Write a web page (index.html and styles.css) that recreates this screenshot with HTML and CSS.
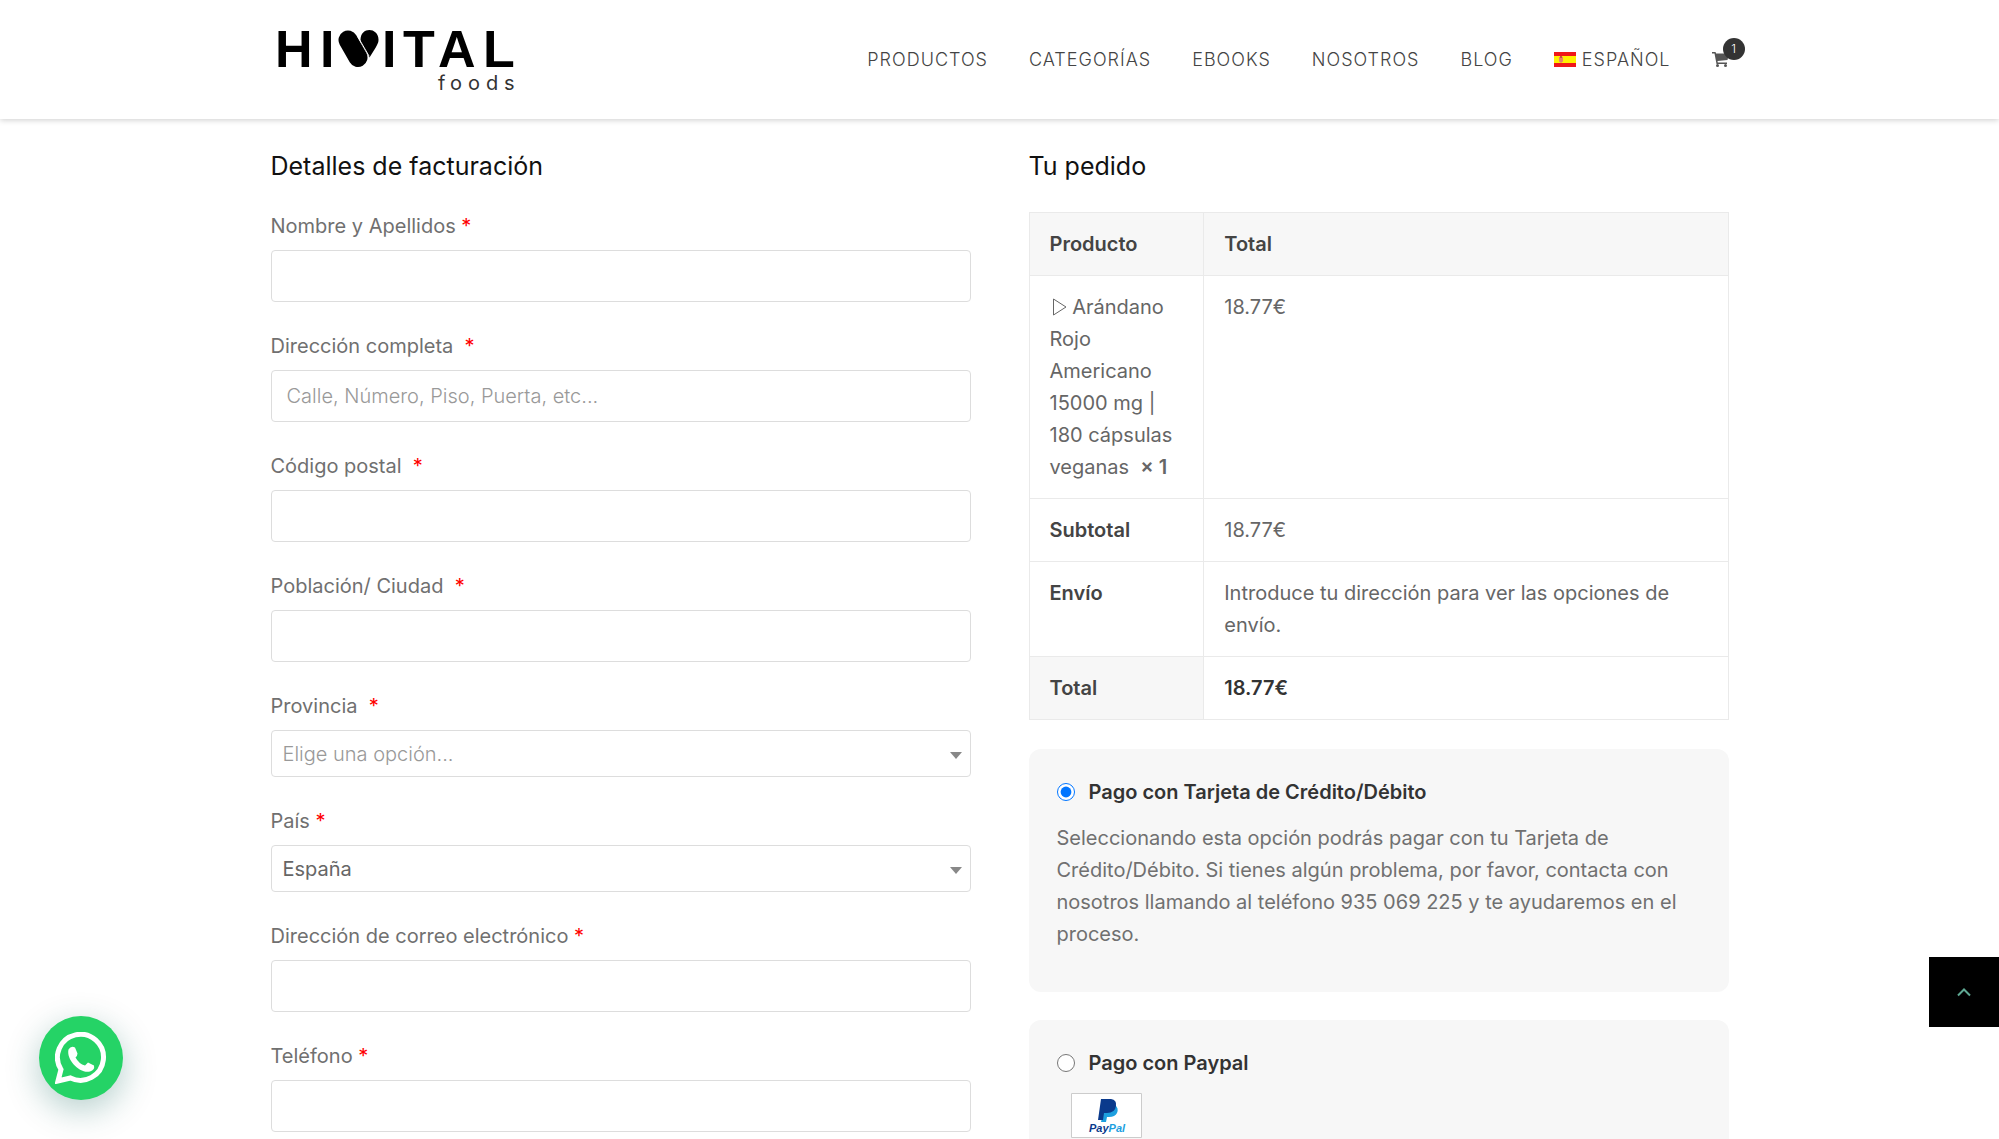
FILE: index.html
```html
<!DOCTYPE html>
<html lang="es">
<head>
<meta charset="utf-8">
<meta name="viewport" content="width=device-width, initial-scale=1">
<title>Finalizar compra – Hivital Foods</title>
<link rel="stylesheet" href="styles.css">
</head>
<body>
<header class="site-header">
  <div class="container header-inner">
    <a class="logo" href="#" aria-label="Hivital foods">
      <svg width="240" height="64" viewBox="275 28 240 64">
        <text class="logo-name" x="275 320 382 403 438 483" y="67">HIITAL</text>
        <g stroke-linecap="round" fill="none">
          <path d="M348 40 358 57.500" stroke="#000" stroke-width="19"/>
          <path d="M360.500 40.500C360 26 379 27 378.500 40C378.500 43 377 46 369.500 57.500L361.500 44Z" fill="#000"/>
          <path d="M358 37 369 56" stroke="#fff" stroke-width="1"/>
        </g>
        <text class="logo-sub" x="438 450 468 486 504" y="90">foods</text>
      </svg>
    </a>
    <nav class="nav">
      <a href="#">PRODUCTOS</a>
      <a href="#">CATEGORÍAS</a>
      <a href="#">EBOOKS</a>
      <a href="#">NOSOTROS</a>
      <a href="#">BLOG</a>
      <a class="lang" href="#">
        <svg width="22" height="15" viewBox="0 0 22 15"><path fill="#f01818" d="M0 0h22v15H0z"/><path fill="#fff000" d="M0 4h22v7H0z"/><path fill="#e8806a" d="M5 5h4v4.500L7 11 5 9.500z"/><path fill="#c8503c" d="M6 4h2v2H6z"/></svg>
        <span>ESPAÑOL</span>
      </a>
      <a class="cart" href="#" aria-label="Carrito">
        <svg width="17" height="15" viewBox="0 0 17 15"><path fill="#555" d="M0 0h3.500l.6 1.500H17l-1.500 6.500-10 1 .3 1.500H15V12H4.500L2.500 1.500H0z"/><circle cx="5.500" cy="13.500" r="1.500" fill="#555"/><circle cx="13.500" cy="13.500" r="1.500" fill="#555"/></svg>
        <span class="badge">1</span>
      </a>
    </nav>
  </div>
</header>

<main class="container checkout">
  <form class="billing">
    <h3>Detalles de facturación</h3>
    <div class="field"><label for="name">Nombre y Apellidos <b>*</b></label><input id="name" type="text"></div>
    <div class="field"><label for="address">Dirección completa &nbsp;<b>*</b></label><input id="address" type="text" placeholder="Calle, Número, Piso, Puerta, etc..."></div>
    <div class="field"><label for="zip">Código postal &nbsp;<b>*</b></label><input id="zip" type="text"></div>
    <div class="field"><label for="city">Población/ Ciudad &nbsp;<b>*</b></label><input id="city" type="text"></div>
    <div class="field"><label for="state">Provincia &nbsp;<b>*</b></label><div class="select"><select id="state" class="empty"><option>Elige una opción...</option></select></div></div>
    <div class="field"><label for="country">País <b>*</b></label><div class="select"><select id="country"><option>España</option></select></div></div>
    <div class="field"><label for="email">Dirección de correo electrónico <b>*</b></label><input id="email" type="email"></div>
    <div class="field last"><label for="phone">Teléfono <b>*</b></label><input id="phone" type="tel"></div>
    <div class="field"><label for="company">Nombre de empresa (opcional)</label><input id="company" type="text"></div>
  </form>

  <section class="order">
    <h3>Tu pedido</h3>
    <table>
      <thead><tr><th>Producto</th><th>Total</th></tr></thead>
      <tbody>
        <tr><td><svg class="play" width="14" height="18" viewBox="0 0 14 18"><path d="M.5 1v16L13 9z" fill="none" stroke="#666"/></svg> Arándano Rojo Americano 15000 mg | 180 cápsulas veganas &nbsp;<strong>× 1</strong></td><td>18.77€</td></tr>
        <tr><th>Subtotal</th><td>18.77€</td></tr>
        <tr><th>Envío</th><td>Introduce tu dirección para ver las opciones de envío.</td></tr>
        <tr class="total"><th>Total</th><td>18.77€</td></tr>
      </tbody>
    </table>

    <div class="payment">
      <div class="method"><input type="radio" name="pay" id="card" checked><label for="card">Pago con Tarjeta de Crédito/Débito</label></div>
      <p>Seleccionando esta opción podrás pagar con tu Tarjeta de Crédito/Débito. Si tienes algún problema, por favor, contacta con nosotros llamando al teléfono 935 069 225 y te ayudaremos en el proceso.</p>
    </div>
    <div class="payment">
      <div class="method"><input type="radio" name="pay" id="paypal"><label for="paypal">Pago con Paypal</label></div>
      <svg class="paypal" width="71" height="45" viewBox="0 0 71 45">
        <path d="M.5.500h70v44H.5z" fill="#fff" stroke="#ccc"/>
        <path d="M34 12h10q4 3 2 8-2 4-8 4h-2l-1 5h-5z" fill="#1d9fdf"/>
        <path d="M30 6h10q6 1 5 7-1 7-9 7h-3l-1 7h-5z" fill="#0a3a8c"/>
        <text x="18" y="39"><tspan fill="#0a3a8c">Pay</tspan><tspan fill="#1d9fdf">Pal</tspan></text>
      </svg>
    </div>
  </section>
</main>

<button class="whatsapp" type="button" aria-label="WhatsApp">
  <svg width="52" height="52" viewBox="0 0 52 52"><path d="M3 49 6 37.500A23 23 0 1 1 15.500 46z" fill="none" stroke="#fff" stroke-width="5"/><path d="M13.500 17.500Q16 13.500 20 15.500L22.500 21.500Q22.500 23.500 20.500 25.500 24 32 30 33.500L33 30.500 39 33.500Q40 38 35 39.500C25 42 11 28 13.500 17.500z" fill="#fff"/></svg>
</button>
<button class="to-top" type="button" aria-label="Volver arriba">
  <svg width="16" height="10" viewBox="0 0 16 10"><path d="M2 8.500 8 2.500l6 6" fill="none" stroke="#5fa893" stroke-width="2"/></svg>
</button>
</body>
</html>
```
FILE: styles.css
```css
* { box-sizing: border-box; }
html { height: 100%; }
body {
  margin: 0;
  height: 100%;
  overflow-y: auto;
  scrollbar-width: none;
  background: #fff;
  color: #666;
  font: 400 20px/32px Inter, "Open Sans", sans-serif;
}
a { color: inherit; text-decoration: none; }
button { border: 0; padding: 0; display: grid; place-items: center; cursor: pointer; }

.container { max-width: 1498px; margin: 0 auto; padding: 0 20px; }

.site-header { background: #fff; box-shadow: 0 1px 6px rgba(0, 0, 0, .2); }
.header-inner { height: 119px; display: flex; align-items: center; justify-content: space-between; }
.logo { margin-left: 4px; display: flex; }
.logo-name { font: 700 52px "Liberation Sans", sans-serif; }
.logo-sub { font: 400 20px Inter, sans-serif; fill: #333; }
.nav { display: flex; align-items: center; gap: 41px; font-size: 18px; font-weight: 300; letter-spacing: 1px; color: #444; }
.lang { display: flex; align-items: center; gap: 6px; }
.cart { position: relative; display: flex; }
.badge {
  position: absolute;
  left: 11px;
  top: -14px;
  width: 22px;
  height: 22px;
  border-radius: 50%;
  background: #333;
  color: #fff;
  font-size: 12px;
  line-height: 22px;
  letter-spacing: 0;
  text-align: center;
}

.checkout { display: grid; grid-template-columns: 1fr 1fr; gap: 58px; padding-top: 31px; padding-bottom: 60px; }
h3 { margin: 0; color: #111; font-size: 25px; font-weight: 400; line-height: 32px; }

.billing h3 { margin-bottom: 28px; }
.field { display: flex; flex-direction: column; gap: 8px; margin-bottom: 28px; }
.field.last { margin-bottom: 0; }
.field label { color: #707070; }
.field b { color: red; font-weight: 400; }
.field input, .select select {
  width: 100%;
  height: 52px;
  padding: 0 15px;
  border: 1px solid #ddd;
  border-radius: 4px;
  background: #fff;
  color: #666;
  font: inherit;
}
.field input::placeholder { color: #999; font-weight: 300; opacity: 1; }
.select { position: relative; display: flex; }
.select select { height: 47px; padding: 0 11px; appearance: none; }
.select .empty { color: #999; font-weight: 300; }
.select::after {
  content: "";
  position: absolute;
  right: 9px;
  top: 22px;
  border: 6px solid transparent;
  border-top: 7px solid #888;
  border-bottom: 0;
  pointer-events: none;
}

.order h3 { margin-bottom: 30px; }
table { width: 100%; table-layout: fixed; border-collapse: collapse; margin-bottom: 29px; }
th, td { padding: 15px 20px; border: 1px solid #eaeaea; text-align: left; vertical-align: top; }
th:first-child, td:first-child { width: 25%; }
th { color: #444; font-weight: 600; }
thead th, .total th { background: #f7f7f7; }
strong { font-weight: 600; }
.total td { color: #333; font-weight: 600; }
.play { margin-left: 3px; vertical-align: -2px; }

.payment { padding: 27px 28px 42px; margin-bottom: 28px; border-radius: 12px; background: #f7f7f7; }
.method { display: flex; align-items: center; gap: 14px; color: #333; font-weight: 600; }
.method input { width: 18px; height: 18px; margin: 0; }
.payment p { margin: 14px 0 0; color: #707070; }
.paypal { display: block; margin: 14px 0 0 14px; font: italic 700 11px "Liberation Sans", sans-serif; }

.whatsapp {
  position: fixed;
  left: 39px;
  bottom: 39px;
  width: 84px;
  height: 84px;
  border-radius: 50%;
  background: #25d366;
  box-shadow: 0 10px 34px rgba(7, 94, 84, .3);
}
.to-top { position: fixed; right: 0; bottom: 112px; width: 70px; height: 70px; background: #000; }
```
